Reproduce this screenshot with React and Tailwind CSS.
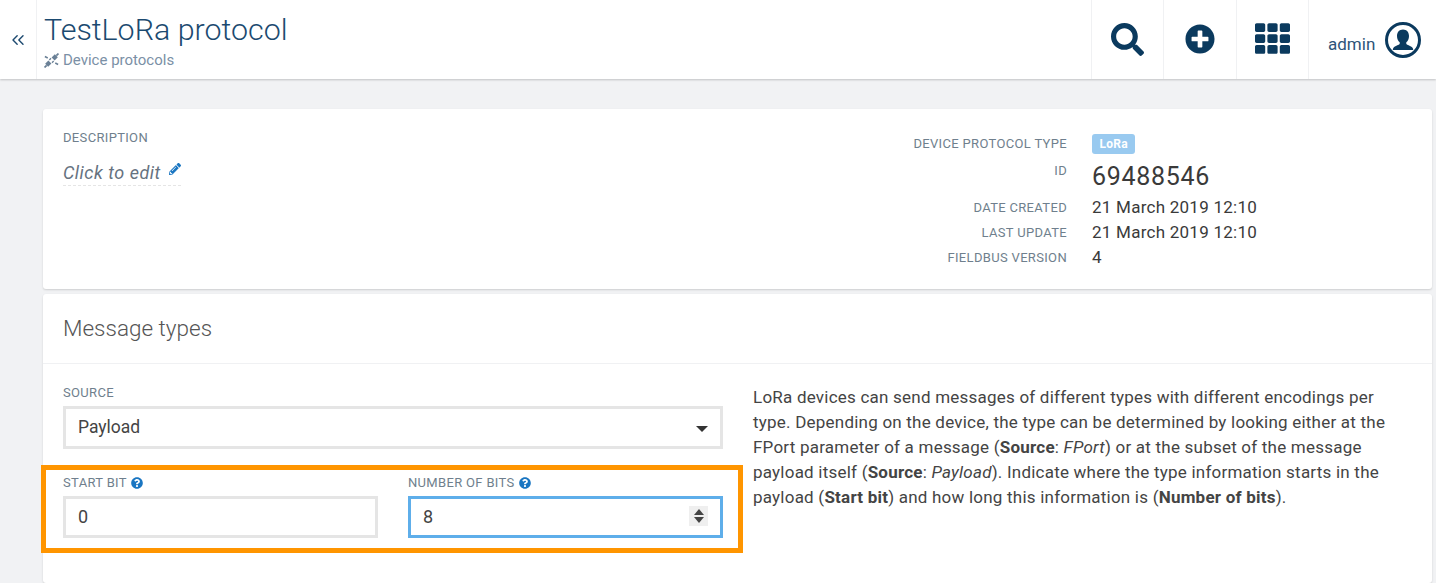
import React from "react";
import { ChevronsLeft } from "lucide-react";
import { FaSearch, FaPlusCircle, FaTh, FaPencilAlt, FaQuestionCircle } from "react-icons/fa";

const PlugIcon = () => (
  <svg viewBox="0 0 14 14" className="w-[15px] h-[15px] text-[#6a8096]" fill="none" stroke="currentColor">
    <path d="M.5 13.500L2.500 11.500M13.500.5L11.500 2.500" strokeWidth="1.600" />
    <path d="M2.500 11.500L5.500 8.500M11.500 2.500L8.500 5.500" strokeWidth="4" />
    <path d="M5 6.500L6.500 5M7.500 9L9 7.500" strokeWidth="1.300" />
    <path d="M.8 3.300L3.500 4.700M10.500 9.300L13.200 10.700" strokeWidth="1.400" />
  </svg>
);

const UserIcon = () => (
  <svg viewBox="0 0 36 36" className="w-9 h-9 text-[#0b3a5e]" fill="currentColor">
    <circle cx="18" cy="18" r="16.500" fill="none" stroke="currentColor" strokeWidth="3" />
    <path d="M18 7.500c-3.700 0-6 2.800-6 6.500 0 2.700 1.100 5 2.700 6.300v1.700c-.5 1-4.700 1.700-6.200 3.700-.5.700-.7 1.500-.7 2.300h20.400c0-.8-.2-1.600-.7-2.300-1.500-2-5.700-2.700-6.200-3.700v-1.700c1.600-1.300 2.700-3.600 2.700-6.300 0-3.700-2.300-6.500-6-6.500z" />
  </svg>
);

const NavButton = ({ children }) => (
  <div className="w-[72.500px] flex items-center justify-center border-l border-[#f0f1f3] text-[#0b3a5e]">{children}</div>
);

const InfoRow = ({ label, children }) => (
  <div className="flex items-center gap-[25px] h-[25px]">
    <div className="w-[310px] text-right text-[13px] text-[#6f7f8d] uppercase tracking-[0.33px]">{label}</div>
    <div className="text-[#3a3a3a] text-[17px] tracking-[0.25px]">{children}</div>
  </div>
);

const FieldLabel = ({ children, help }) => (
  <div className="flex items-center gap-[4px] h-[14px] text-[13px] text-[#6f7f8d] uppercase tracking-[0.33px]">
    {children}
    {help && <FaQuestionCircle className="text-[#1a76c2] text-xs" />}
  </div>
);

export default function App() {
  return (
    <div className="relative h-screen overflow-hidden bg-[#f1f2f4] font-['Roboto',sans-serif]">
      {/* Top bar */}
      <header className="flex h-[79px] bg-white shadow-[0_1px_2px_rgba(0,0,0,0.2)]">
        <div className="w-[37px] flex items-center justify-center border-r border-[#f0f1f3] text-[#1d4a70]">
          <ChevronsLeft size={20} strokeWidth={1.7} className="mr-[1px]" />
        </div>
        <div className="pl-[7px] flex-1">
          <h1 className="mt-[11px] text-[30.400px] leading-[38px] font-light text-[#1b4a70]">TestLoRa protocol</h1>
          <div className="mt-[1px] flex items-center gap-[4px] text-[15px] leading-[20px] text-[#7b90a6]">
            <PlugIcon />
            Device protocols
          </div>
        </div>
        <div className="flex">
          <NavButton><FaSearch className="text-[33px]" /></NavButton>
          <NavButton><FaPlusCircle className="text-[30px] mb-[2px]" /></NavButton>
          <NavButton><FaTh className="text-[35px] mb-[3px]" /></NavButton>
          <div className="w-[128px] flex items-center gap-[10px] pl-[19px] border-l border-[#f0f1f3]">
            <span className="mt-[10px] text-[17px] text-[#2d5479]">admin</span>
            <UserIcon />
          </div>
        </div>
      </header>

      <main className="pl-[43px] pr-[4px] pt-[30px]">
        {/* Details */}
        <section className="h-[180px] flex bg-white rounded-[3px] shadow-[0_1px_2px_rgba(0,0,0,0.15)]">
          <div className="w-[560px] pl-[20px] pt-[22px]">
            <div className="text-[13px] leading-[14px] text-[#6f7f8d] uppercase tracking-[0.33px]">Description</div>
            <div className="mt-[15px] inline-flex items-start gap-[8px] border-b border-dashed border-[#e5e5e5] text-[#66727f] text-lg leading-[25px] italic tracking-[0.5px]">
              Click to edit
              <FaPencilAlt className="mt-[3px] text-[#1a76c2] text-xs" />
            </div>
          </div>
          <div className="pt-[22px] pl-[154px]">
            <InfoRow label="Device protocol type">
              <span className="flex items-center h-[20px] px-[7.500px] rounded-[3px] bg-[#99caf0] text-white text-xs font-bold">LoRa</span>
            </InfoRow>
            <div className="flex gap-[25px] h-[39px]">
              <div className="w-[310px] pt-[8px] text-right text-[13px] leading-[14px] text-[#6f7f8d] uppercase tracking-[0.33px]">ID</div>
              <div className="text-[#3a3a3a] text-[25px] leading-[41px] tracking-[0.7px]">69488546</div>
            </div>
            <InfoRow label="Date created">21 March 2019 12:10</InfoRow>
            <InfoRow label="Last update">21 March 2019 12:10</InfoRow>
            <InfoRow label="Fieldbus version">4</InfoRow>
          </div>
        </section>

        {/* Message types */}
        <section className="mt-[5px] h-[289px] bg-white rounded-[3px] shadow-[0_1px_2px_rgba(0,0,0,0.15)]">
          <div className="h-[70px] flex items-center pl-[20px] pt-[1px] border-b border-[#f0f1f3] text-[22.500px] font-light text-[#555]">
            Message types
          </div>
          <div className="flex gap-[30px] px-[20px] pt-[22px]">
            <div className="w-[660px] shrink-0">
              <FieldLabel>Source</FieldLabel>
              <div className="relative mt-[6px]">
                <select
                  defaultValue="Payload"
                  className="block w-full h-[43px] pl-[12px] appearance-none border-[3px] border-[#e5e5e5] bg-white text-[17.500px] text-[#444] outline-none"
                >
                  <option>Payload</option>
                  <option>FPort</option>
                </select>
                <div className="absolute right-[15px] top-[20px] border-x-[6px] border-t-[6px] border-x-transparent border-t-[#333]" />
              </div>
              <div className="mt-[27px] grid grid-cols-2 gap-[30px]">
                <div>
                  <FieldLabel help>Start bit</FieldLabel>
                  <input
                    readOnly
                    value="0"
                    className="block mt-[6px] w-full h-[42px] pl-[12px] pb-[1px] border-[3px] border-[#e5e5e5] text-lg text-[#444] outline-none"
                  />
                </div>
                <div>
                  <FieldLabel help>Number of bits</FieldLabel>
                  <div className="relative mt-[6px]">
                    <input
                      readOnly
                      value="8"
                      className="block w-full h-[42px] pl-[12px] pb-[1px] border-[3px] border-[#5eaeea] text-lg text-[#444] outline-none"
                    />
                    <div className="absolute right-[15px] top-[10px] w-[19px] h-[20px] flex flex-col items-center justify-center gap-[2px] bg-[#efefef]">
                      <div className="border-x-[5px] border-b-[6px] border-x-transparent border-b-[#444]" />
                      <div className="border-x-[5px] border-t-[6px] border-x-transparent border-t-[#444]" />
                    </div>
                  </div>
                </div>
              </div>
            </div>
            <p className="-mt-[1px] w-[650px] text-[17px] tracking-[0.22px] leading-[25px] text-[#444]">
              LoRa devices can send messages of different types with different encodings per type. Depending on the device, the type can be determined by looking either at the FPort parameter of a message (<b>Source</b>: <i>FPort</i>) or at the subset of the message payload itself (<b>Source</b>: <i>Payload</i>). Indicate where the type information starts in the payload (<b>Start bit</b>) and how long this information is (<b>Number of bits</b>).
            </p>
          </div>
        </section>
      </main>

      {/* Highlight round the two fields */}
      <div className="absolute left-[41px] top-[465px] w-[702px] h-[88px] border-[5px] border-[#ff9500] pointer-events-none" />
    </div>
  );
}
